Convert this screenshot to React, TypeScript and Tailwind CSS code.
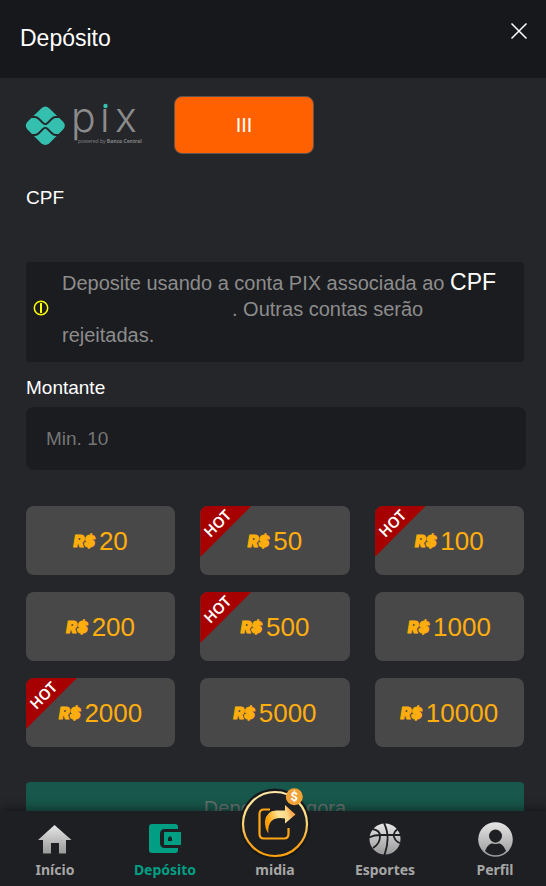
import { useState } from "react";
import type { ReactNode } from "react";
import { clsx } from "clsx";

const amounts = [
  { value: 20, hot: false },
  { value: 50, hot: true },
  { value: 100, hot: true },
  { value: 200, hot: false },
  { value: 500, hot: true },
  { value: 1000, hot: false },
  { value: 2000, hot: true },
  { value: 5000, hot: false },
  { value: 10000, hot: false },
];

function PixLogo() {
  return (
    <svg className="w-[118px] h-[58px] shrink-0 overflow-visible" viewBox="0 0 118 58" role="img" aria-label="pix">
      <path
        d="M15.2 12.4Q19.3 8.8 23.4 12.4L36.9 25.6Q40.6 29.7 36.9 33.8L23.4 47.2Q19.3 50.8 15.2 47.2L1.7 33.8Q-2 29.7 1.7 25.6Z"
        fill="#35bfae"
      />
      <g fill="none" stroke="#25262a" strokeWidth="1.8">
        <path d="M3 21h6q2 0 4 2l4 4q2.300 2.200 4.600 0l4-4q2-2 4-2h7" />
        <path d="M3 39h6q2 0 4-2l4-4q2.300-2.200 4.600 0l4 4q2 2 4 2h7" />
      </g>
      <text x="45 74 89" y="36" fontSize="41" fontWeight="300" fill="#8b8b8b" className="font-['Inter',sans-serif]">
        pix
      </text>
      <rect x="75" y="3" width="9" height="9" fill="#25262a" />
      <circle cx="79.500" cy="10" r="2.200" fill="#35bfae" />
      <text x="52" y="47" fontSize="5" fill="#858585" className="font-['Open_Sans',sans-serif]">
        powered by <tspan fontWeight="700">Banco Central</tspan>
      </text>
    </svg>
  );
}

function InfoIcon() {
  return (
    <svg className="w-4 h-4 shrink-0" viewBox="0 0 16 16" fill="none" stroke="#ffff00" strokeWidth="1.500">
      <circle cx="8" cy="8" r="6.700" />
      <path d="M8 3v10" strokeWidth="2" />
    </svg>
  );
}

function Silver({ id }: { id: string }) {
  return (
    <linearGradient id={id} x1="0" y1="0" x2="0" y2="1">
      <stop offset="0" stopColor="#e6e6e6" />
      <stop offset="1" stopColor="#999999" />
    </linearGradient>
  );
}

function HomeIcon() {
  return (
    <svg className="w-[34px] h-[30px]" viewBox="0 0 34 30">
      <defs><Silver id="home" /></defs>
      <path d="M16.500 1 33.500 16H28v13.500h-7V19h-8v10.500H5V16H0Z" fill="url(#home)" />
    </svg>
  );
}

function WalletIcon() {
  return (
    <svg className="w-8 h-[30px]" viewBox="0 0 32 30" fill="#009f84">
      <path d="M3 0h23q3 0 3 3v2H16q-5 0-5 5v9q0 5 5 5h13v2q0 3-3 3H3q-3 0-3-3V3Q0 0 3 0Z" />
      <path fillRule="evenodd" d="M15 8h17v13H15ZM19 14v3h4v-3l-2-2Z" />
    </svg>
  );
}

function BallIcon() {
  return (
    <svg className="w-8 h-8" viewBox="0 0 32 32">
      <defs><Silver id="ball" /></defs>
      <circle cx="16" cy="16" r="15.500" fill="url(#ball)" />
      <g fill="none" stroke="#1e1f23" strokeWidth="1.800">
        <path d="M15 0Q22 14 15.500 32M0 14.500Q5 12 12 12H32" />
        <path d="M3 6Q11 7 11 13Q11 21 4 25" />
        <path d="M29 6Q24 9 25 14Q27 19 31 20" />
      </g>
    </svg>
  );
}

function ProfileIcon() {
  return (
    <svg className="w-[35px] h-[35px]" viewBox="0 0 35 35">
      <defs><Silver id="profile" /></defs>
      <circle cx="17.500" cy="17.500" r="17.300" fill="url(#profile)" />
      <circle cx="17.500" cy="14" r="6.500" fill="#1e1f23" />
      <path d="M7 29Q10 20.500 17.500 20.500T28 29Q23.500 33.300 17.500 33.300T7 29Z" fill="#1e1f23" />
      <path d="M13 20.500q4.500 2 9 0" fill="none" stroke="#b5b5b5" strokeWidth="1.200" />
    </svg>
  );
}

function ShareBadge() {
  return (
    <svg className="w-[72px] h-[74px]" viewBox="0 0 72 74">
      <defs>
        <linearGradient id="ring" x1="0" y1="0" x2="0" y2="1">
          <stop offset="0" stopColor="#ffe9a8" />
          <stop offset="0.450" stopColor="#fbd97c" />
          <stop offset="0.800" stopColor="#f9a11b" />
          <stop offset="1" stopColor="#ffa30a" />
        </linearGradient>
        <linearGradient id="arrow" x1="0" y1="0.300" x2="1" y2="0">
          <stop offset="0" stopColor="#ff9d00" />
          <stop offset="0.400" stopColor="#ffe596" />
          <stop offset="0.650" stopColor="#ffd98a" />
          <stop offset="0.800" stopColor="#ffa94d" />
        </linearGradient>
      </defs>
      <circle cx="36" cy="38" r="35.500" fill="#17181b" />
      <circle cx="36" cy="38" r="32" fill="#1e1f23" stroke="url(#ring)" strokeWidth="2.200" />
      <path
        d="M31 23.500h-6q-4.500 0-4.500 4.500v20q0 4.500 4.500 4.500h20q4.500 0 4.500-4.500V42"
        fill="none"
        stroke="#ffa616"
        strokeWidth="2.200"
      />
      <path d="M46 19 56.500 28.500 46 37.500V32.500Q36.500 31 32.500 35T29.500 47.500Q25.500 42 26 35Q27.500 25 37 24.500H46Z" fill="url(#arrow)" />
      <circle cx="55.300" cy="10.700" r="8.500" fill="#f1a235" />
      <text x="55.300" y="15.200" textAnchor="middle" fontSize="13" fill="#fff" className="font-['Roboto',sans-serif]">
        $
      </text>
    </svg>
  );
}

interface NavItemProps {
  label: string;
  icon?: ReactNode;
  floating?: ReactNode;
  active?: boolean;
}

function NavItem({ label, icon, floating, active }: NavItemProps) {
  return (
    <a
      href="#"
      className={clsx(
        "relative flex flex-col items-center pt-2.5 pb-[7px] gap-1 font-['Noto_Sans',sans-serif] text-sm leading-[18px] font-bold",
        active ? "text-[#009f84]" : "text-[#a6a6a6]"
      )}
    >
      <span className="h-9 flex items-center justify-center">{icon}</span>
      {floating && <span className="absolute -top-[25px] left-1/2 -translate-x-1/2">{floating}</span>}
      {label}
    </a>
  );
}

export default function App() {
  const [amount, setAmount] = useState("");

  return (
    <div className="h-screen flex flex-col overflow-hidden bg-[#25262a] text-white font-['Liberation_Sans',Arial,sans-serif]">
      <header className="flex items-start justify-between bg-[#17181c] pl-5 pr-4 pt-5 pb-[22px]">
        <h1 className="text-[23px] leading-9">Depósito</h1>
        <button type="button" aria-label="Fechar" className="p-0.5">
          <svg className="w-[18px] h-[18px]" viewBox="0 0 18 18" stroke="#fff" strokeWidth="1.500">
            <path d="M1.500 1.500l15 15M16.500 1.500l-15 15" />
          </svg>
        </button>
      </header>

      <main className="flex-1 min-h-0 overflow-y-auto [scrollbar-width:none] pl-[26px] pr-[22px] pt-[18px]">
        <div className="flex items-center gap-[30px]">
          <PixLogo />
          <button type="button" className="w-[140px] h-[58px] rounded-lg border border-[#5c5450] bg-[#ff6000] text-xl">
            III
          </button>
        </div>

        <h2 className="mt-8 text-[19px] leading-6">CPF</h2>

        <div className="mt-[52px] flex items-center gap-[13px] rounded bg-[#1b1c20] pl-[7px] pr-3.5 pb-2 h-[100px]">
          <InfoIcon />
          <p className="text-xl leading-[26px] text-[#8c8c8c]">
            Deposite usando a conta PIX associada ao <span className="text-[23px] text-white">CPF</span>{" "}
            <span className="inline-block w-[170px]" />. Outras contas serão rejeitadas.
          </p>
        </div>

        <label htmlFor="montante" className="mt-3.5 block text-[19px] leading-6">
          Montante
        </label>
        <div className="mt-[7px] -mr-0.5">
          <input
            id="montante"
            inputMode="numeric"
            placeholder="Min. 10"
            value={amount}
            onChange={(e) => setAmount(e.target.value)}
            className="block w-full h-[63px] rounded-lg bg-[#1b1c20] px-5 text-[19px] text-white placeholder:text-[#757575] outline-none"
          />
        </div>

        <div className="mt-9 grid grid-cols-3 gap-x-[25px] gap-y-[17px]">
          {amounts.map(({ value, hot }) => (
            <button
              key={value}
              type="button"
              onClick={() => setAmount(String(value))}
              className="relative h-[69px] overflow-hidden rounded-lg bg-[#484848] flex items-center justify-center gap-1 text-[#ffae0d]"
            >
              {hot && (
                <span className="absolute left-0 top-0 w-[51px] h-[51px] bg-[#a60000] [clip-path:polygon(0_0,100%_0,0_100%)]">
                  <span className="flex w-[34px] h-[34px] -rotate-45 items-center justify-center font-['Noto_Sans',sans-serif] text-[15px] font-semibold text-white">
                    HOT
                  </span>
                </span>
              )}
              <span className="font-['Inter',sans-serif] text-base font-black italic [-webkit-text-stroke:1px_#ffae0d]">R$</span>
              <span className="text-[26px] leading-8">{value}</span>
            </button>
          ))}
        </div>

        <button
          type="button"
          disabled
          className="mt-[35px] mb-6 block w-full h-[52px] rounded-sm bg-[#18574b] text-xl text-[#66706e]"
        >
          Depositar agora
        </button>
      </main>

      <nav className="relative -mr-1 grid grid-cols-5 bg-[#1e1f23] shadow-[0_-2px_10px_rgba(0,0,0,0.45)]">
        <NavItem label="Início" icon={<HomeIcon />} />
        <NavItem label="Depósito" icon={<WalletIcon />} active />
        <NavItem label="midia" floating={<ShareBadge />} />
        <NavItem label="Esportes" icon={<BallIcon />} />
        <NavItem label="Perfil" icon={<ProfileIcon />} />
      </nav>
    </div>
  );
}
